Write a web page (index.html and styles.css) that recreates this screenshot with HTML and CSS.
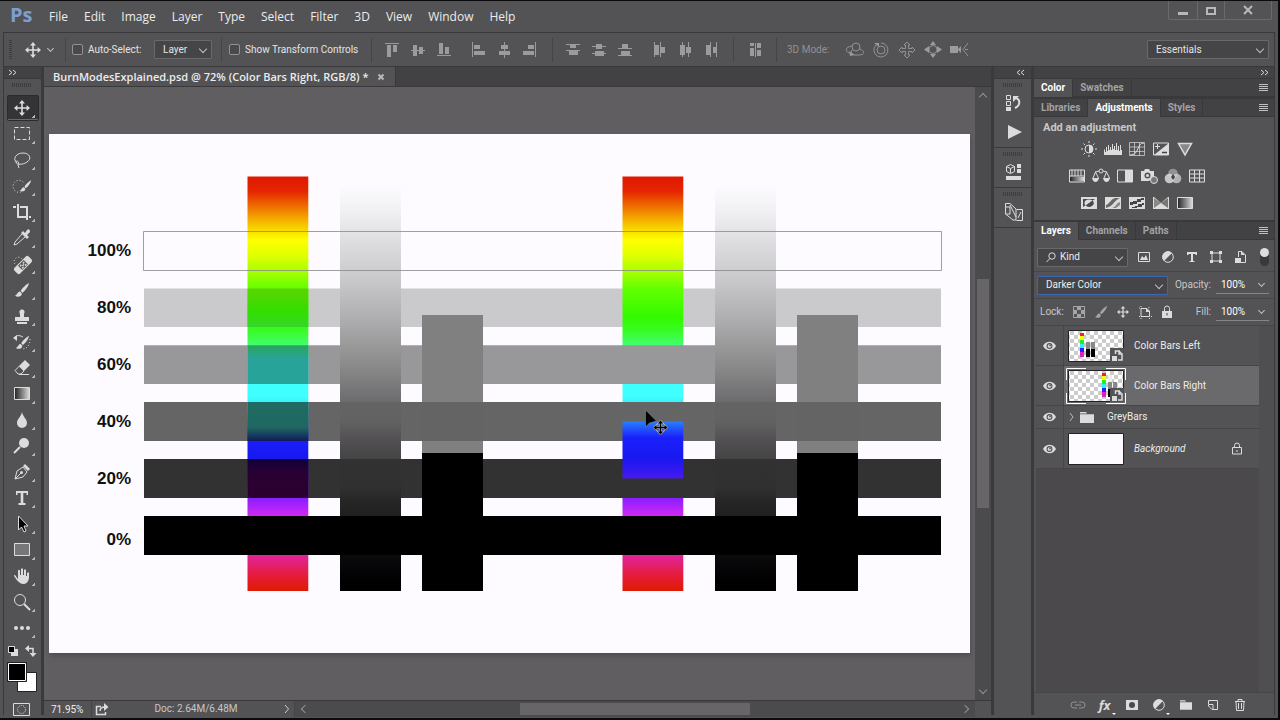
FILE: index.html
```
<!DOCTYPE html>
<html lang="en">
<head>
<meta charset="utf-8">
<title>BurnModesExplained.psd</title>
<link rel="stylesheet" href="styles.css">
</head>
<body>
<svg class="defs" aria-hidden="true">
  <symbol id="eye" viewBox="0 0 14 10"><path d="M0 5C3-1 11-1 14 5C11 11 3 11 0 5Z" fill="#dcdcdc"/><circle cx="7" cy="5" r="3.2" fill="#535254"/><circle cx="7" cy="5" r="2" fill="#dcdcdc"/><circle cx="7.6" cy="4.4" r=".9" fill="#535254"/></symbol>
  <symbol id="move" viewBox="0 0 16 16"><path d="M8 0L11 3.4H8.8V7.2H12.6V5L16 8L12.6 11V8.8H8.8V12.6H11L8 16L5 12.6H7.2V8.8H3.4V11L0 8L3.4 5V7.2H7.2V3.4H5Z"/></symbol>
  <symbol id="brush" viewBox="0 0 18 18"><path d="M17 1C13 3 9 7 7.500 10L9.500 12C12.500 10 16 5 17 1ZM6.800 10.800C4 10.500 4.500 14 1 15.500C4 17.500 9 16.500 8.800 12.800Z"/></symbol>
  <symbol id="folder" viewBox="0 0 14 11"><path d="M0 0H6L7 1.500H0ZM0 2.200H14V11H0Z"/></symbol>
  <symbol id="halfcircle" viewBox="0 0 12 12"><circle cx="6" cy="6" r="5.300" fill="none" stroke="#dcdcdc"/><path d="M10 2A5.600 5.600 0 0 0 2 10Z" fill="#dcdcdc"/></symbol>
  <symbol id="smart" viewBox="0 0 14 14"><path d="M0 0H14V14H0Z" fill="#535254"/><path d="M5.500 6V3H9V6H12V12H8" fill="none" stroke="#dcdcdc" stroke-width="1.500"/><path d="M2 8H7V13H2ZM9 2L12.500 5.500H9Z" fill="#dcdcdc"/></symbol>
  <linearGradient id="rainbow" x1="0" y1="177" x2="0" y2="591" gradientUnits="userSpaceOnUse">
    <stop offset="0" stop-color="#df1800"/><stop offset=".035" stop-color="#e62600"/><stop offset=".07" stop-color="#ee6c00"/><stop offset=".1" stop-color="#f4a800"/><stop offset=".13" stop-color="#f7de00"/><stop offset=".152" stop-color="#ffff00"/><stop offset=".19" stop-color="#e0ff00"/><stop offset=".23" stop-color="#a4ff00"/><stop offset=".27" stop-color="#62ff00"/><stop offset=".34" stop-color="#33fa00"/><stop offset=".37" stop-color="#39fb24"/><stop offset=".405" stop-color="#40ff6c"/><stop offset=".46" stop-color="#40ffff"/><stop offset=".53" stop-color="#40ffff"/><stop offset=".55" stop-color="#39e8fc"/><stop offset=".59" stop-color="#2880fc"/><stop offset=".63" stop-color="#1a20fb"/><stop offset=".68" stop-color="#1818f0"/><stop offset=".727" stop-color="#4619ef"/><stop offset=".78" stop-color="#9020ff"/><stop offset=".815" stop-color="#cd28f2"/><stop offset=".913" stop-color="#e0249c"/><stop offset=".96" stop-color="#e61c40"/><stop offset="1" stop-color="#df1a00"/>
  </linearGradient>
  <linearGradient id="ramp" x1="0" y1="177" x2="0" y2="591" gradientUnits="userSpaceOnUse">
    <stop offset=".02" stop-color="#fdfbff"/><stop offset=".085" stop-color="#f0eff1"/><stop offset=".15" stop-color="#dfdee0"/><stop offset=".25" stop-color="#c8c7c9"/><stop offset=".35" stop-color="#acabad"/><stop offset=".405" stop-color="#9b9a9b"/><stop offset=".48" stop-color="#838283"/><stop offset=".543" stop-color="#6c6b6d"/><stop offset=".544" stop-color="#656465"/><stop offset=".59" stop-color="#636263"/><stop offset=".63" stop-color="#545254"/><stop offset=".68" stop-color="#454445"/><stop offset=".682" stop-color="#333233"/><stop offset=".75" stop-color="#313031"/><stop offset=".775" stop-color="#292829"/><stop offset=".815" stop-color="#212021"/><stop offset=".913" stop-color="#0b0a0d"/><stop offset=".98" stop-color="#000"/>
  </linearGradient>
  <linearGradient id="mix80" x1="0" y1="0" x2="0" y2="1"><stop offset="0" stop-color="#5cd400"/><stop offset=".6" stop-color="#31df00"/><stop offset="1" stop-color="#35d628"/></linearGradient>
  <linearGradient id="mix60" x1="0" y1="0" x2="0" y2="1"><stop offset="0" stop-color="#2ba55c"/><stop offset=".35" stop-color="#28a39a"/><stop offset="1" stop-color="#28a39a"/></linearGradient>
  <linearGradient id="mix40" x1="0" y1="0" x2="0" y2="1"><stop offset="0" stop-color="#1f6b62"/><stop offset=".65" stop-color="#1e6861"/><stop offset="1" stop-color="#101a5c"/></linearGradient>
  <linearGradient id="mix20" x1="0" y1="0" x2="0" y2="1"><stop offset="0" stop-color="#100038"/><stop offset=".35" stop-color="#2a0033"/><stop offset="1" stop-color="#2b0030"/></linearGradient>
  <linearGradient id="fade"><stop stop-color="#222"/><stop offset="1" stop-color="#ddd"/></linearGradient>
  <pattern id="checker" width="8" height="8" patternUnits="userSpaceOnUse"><path d="M0 0H8V8H0Z" fill="#fff"/><path d="M0 0H4V4H0ZM4 4H8V8H4Z" fill="#ccc"/></pattern>
</svg>

<header class="titlebar">
  <span class="logo">Ps</span>
  <nav class="menu" aria-label="Main menu">
    <button>File</button><button>Edit</button><button>Image</button><button>Layer</button><button>Type</button><button>Select</button><button>Filter</button><button>3D</button><button>View</button><button>Window</button><button>Help</button>
  </nav>
  <div class="window-controls">
    <button aria-label="Minimize"><svg width="28" height="18"><path d="M9 11H19V14H9Z" fill="#b8b8b8"/></svg></button>
    <button aria-label="Maximize"><svg width="26" height="18"><path d="M9 7H17V13H9Z" fill="none" stroke="#b8b8b8" stroke-width="2"/></svg></button>
    <button aria-label="Close"><svg width="46" height="18"><path d="M19 5L27 13M27 5L19 13" stroke="#b8b8b8" stroke-width="2"/></svg></button>
  </div>
</header>

<section class="options" aria-label="Tool options">
  <div class="opt opt-tool"><span class="grip-v"></span><svg class="light" width="16" height="16"><use href="#move"/></svg><span class="chev"></span></div>
  <div class="opt opt-auto">
    <label class="check"><input type="checkbox">Auto-Select:</label>
    <span class="select select-layer"><select aria-label="Auto-select target"><option>Layer</option></select></span>
  </div>
  <div class="opt opt-show"><label class="check"><input type="checkbox">Show Transform Controls</label></div>
  <div class="opt opt-align">
    <button aria-label="Align top edges"><svg width="26" height="18"><path d="M6 2.500H20"/><path d="M8 4H12V16H8ZM14 4H18V11H14Z"/></svg></button>
    <button aria-label="Align vertical centers"><svg width="26" height="18"><path d="M6 9.500H20"/><path d="M8 4H12V15H8ZM14 6H18V13H14Z"/></svg></button>
    <button aria-label="Align bottom edges"><svg width="26" height="18"><path d="M6 14.500H20"/><path d="M8 2H12V13H8ZM14 6H18V13H14Z"/></svg></button>
    <i></i>
    <button aria-label="Align left edges"><svg width="26" height="18"><path d="M7.500 1V16"/><path d="M9 4H15V8H9ZM9 10H20V14H9Z"/></svg></button>
    <button aria-label="Align horizontal centers"><svg width="26" height="18"><path d="M13.500 1V17"/><path d="M10 4H17V8H10ZM8 10H19V14H8Z"/></svg></button>
    <button aria-label="Align right edges"><svg width="26" height="18"><path d="M18.500 1V16"/><path d="M11 4H17V8H11ZM6 10H17V14H6Z"/></svg></button>
  </div>
  <div class="opt opt-dist">
    <button aria-label="Distribute top"><svg width="26" height="18"><path d="M6 3.500H20M6 9.500H20"/><path d="M10 3H16V7H10ZM9 10H18V14H9Z"/></svg></button>
    <button aria-label="Distribute middle"><svg width="26" height="18"><path d="M6 5.500H20M6 12.500H20"/><path d="M10 3H16V8H10ZM9 10H18V15H9Z"/></svg></button>
    <button aria-label="Distribute bottom"><svg width="26" height="18"><path d="M6 7.500H20M6 14.500H20"/><path d="M10 3H16V7H10ZM9 10H18V14H9Z"/></svg></button>
    <i></i>
    <button aria-label="Distribute left"><svg width="26" height="18"><path d="M8.500 1V16M14.500 1V16"/><path d="M9 4H13V14H9ZM15 6H19V12H15Z"/></svg></button>
    <button aria-label="Distribute center"><svg width="26" height="18"><path d="M10.500 1V16M16.500 1V16"/><path d="M8 4H13V14H8ZM14 6H19V12H14Z"/></svg></button>
    <button aria-label="Distribute right"><svg width="26" height="18"><path d="M12.500 1V16M18.500 1V16"/><path d="M8 4H12V14H8ZM15 6H18V12H15Z"/></svg></button>
  </div>
  <div class="opt opt-space"><button aria-label="Auto-align layers"><svg width="26" height="18"><path d="M13.500 2V16"/><path d="M8 2H12V5H8ZM8 7H12V15H8ZM15 2H19V7H15ZM15 9H19V15H15Z"/></svg></button></div>
  <div class="opt opt-3d"><span class="mode">3D Mode:</span>
    <button aria-label="Orbit"><svg width="26" height="18"><g class="ln"><circle cx="14" cy="6" r="4"/><path d="M10 5C3 6 3 10 7 12M10 9L9 12M18 8C23 10 23 14 17 14H12"/></g><path d="M7 10L13 14L8 15Z"/></svg></button>
    <button aria-label="Roll"><svg width="26" height="18"><g class="ln"><circle cx="13" cy="9" r="4"/><path d="M8 4A7 7 0 1 0 13 2"/></g><path d="M6 2H11V6Z"/></svg></button>
    <button aria-label="Pan"><svg width="26" height="18"><path class="ln" d="M13 1L16 4H14.500V7.500H18V6L21 9L18 12V10.500H14.500V14H16L13 17L10 14H11.500V10.500H8V12L5 9L8 6V7.500H11.500V4H10Z"/></svg></button>
    <button aria-label="Slide"><svg width="26" height="18"><circle class="ln" cx="13" cy="8.500" r="4"/><path d="M13 0L16 4H10ZM13 17L10 13H16ZM4 8.500L9 5V12ZM22 8.500L17 5V12Z"/></svg></button>
    <button aria-label="Zoom camera"><svg width="26" height="18"><path d="M4 5H12V8L15 5V12L12 9V12H4Z"/><path class="ln" d="M22 2L17 8.500L22 15M19 8.500H22"/></svg></button>
  </div>
  <span class="select select-workspace"><select aria-label="Workspace"><option>Essentials</option></select></span>
</section>

<main class="workspace">
  <aside class="tools" aria-label="Tools">
    <div class="strip strip-left"><svg width="8" height="7"><path d="M0 1L3 3.500L0 6M4 1L7 3.500L4 6"/></svg></div>
    <div class="grip"></div>
    <div class="tool-list">
      <button class="on" aria-label="Move"><svg viewBox="0 0 26 26"><use href="#move" x="5" y="5" width="16" height="16"/></svg></button>
      <button aria-label="Marquee"><svg viewBox="0 0 26 26"><path class="o" stroke-dasharray="4 2" d="M5.500 6.500H20.500V18.500H5.500Z"/></svg></button>
      <button aria-label="Lasso"><svg viewBox="0 0 26 26"><path class="o" d="M8 16C3 12 7 6 14 6C21 6 23 12 18 15C14 18 7 18 7 15C7 13 11 14 9 18L10 21"/></svg></button>
      <button aria-label="Quick selection"><svg viewBox="0 0 26 26"><path class="o" stroke-dasharray="1 2" d="M12 19A6 6 0 1 1 15 10"/><use href="#brush" x="10" y="6" width="13" height="14"/></svg></button>
      <button aria-label="Crop"><svg viewBox="0 0 26 26"><path class="o2" d="M9 5V18H19M4 8H7M11 8H18V21M20 18H22"/></svg></button>
      <button aria-label="Eyedropper"><svg viewBox="0 0 26 26"><path class="o" d="M13 9L6 17L5 20L8 19L16 12"/><path d="M12 8L14 6L16 8L18 5Q21 3 21 7L18 10L20 12L18 14Z"/></svg></button>
      <button aria-label="Healing brush"><svg viewBox="0 0 26 26"><path class="o" stroke-dasharray="1 2" d="M6 13A4 4 0 1 1 13 8"/><g transform="rotate(-45 14 14)"><rect x="4" y="10" width="20" height="8" rx="2"/><path d="M10 11H18V17H10Z" fill="#535254"/><path d="M11 12H13V13.500H11ZM15 12H17V13.500H15ZM13 13.500H15V15H13ZM11 15H13V16.500H11ZM15 15H17V16.500H15Z"/></g></svg></button>
      <button aria-label="Brush"><svg viewBox="0 0 26 26"><use href="#brush" x="5" y="5" width="16" height="16"/></svg></button>
      <button aria-label="Clone stamp"><svg viewBox="0 0 26 26"><path d="M11 11C8 5 18 5 15 11V14H20V18H6V14H11ZM8 19H18V21H8Z"/></svg></button>
      <button aria-label="History brush"><svg viewBox="0 0 26 26"><path class="o" d="M5 9C8 5 12 7 14 8"/><path d="M4 9L8 6V12Z"/><path class="o" stroke-dasharray="1 2" d="M21 10C21 16 18 20 13 20"/><use href="#brush" x="6" y="6" width="15" height="15"/></svg></button>
      <button aria-label="Eraser"><svg viewBox="0 0 26 26"><path d="M12 9L16 5L21 10L15 16L10 11Z"/><path class="o" d="M10.500 11L6 15.500L9 19H12L15 16ZM10 19.500H20"/></svg></button>
      <button aria-label="Gradient"><svg viewBox="0 0 26 26"><path fill="url(#fade)" stroke="#dcdcdc" d="M5.500 6.500H20.500V18.500H5.500Z"/></svg></button>
      <button aria-label="Blur"><svg viewBox="0 0 26 26"><path d="M13 5C14 10 18 12 18 16A5 5 0 0 1 8 16C8 12 12 10 13 5Z"/></svg></button>
      <button aria-label="Dodge"><svg viewBox="0 0 26 26"><circle cx="15" cy="10" r="5"/><path class="o2" d="M11 14L5 20"/></svg></button>
      <button aria-label="Pen"><svg viewBox="0 0 26 26"><path class="o" d="M6 20L8 12L14 8L18 13L14 18L6 20L12 14"/><circle cx="12.500" cy="13.500" r="1.500"/><path d="M14 7L16 5L21 10L19 12Z"/></svg></button>
      <button aria-label="Type"><svg viewBox="0 0 26 26"><path d="M7 6H19V10H17.500V8H14.300V18H16.500V20H9.500V18H11.700V8H8.500V10H7Z"/></svg></button>
      <button aria-label="Path selection"><svg viewBox="0 0 26 26"><path d="M9.500 5V19L12.500 16L15 21L17 20L15 15H19Z" fill="#000" stroke="#dcdcdc"/></svg></button>
      <button aria-label="Rectangle"><svg viewBox="0 0 26 26"><path d="M5.500 6.500H20.500V18.500H5.500Z" fill="#777678" stroke="#dcdcdc"/></svg></button>
      <button aria-label="Hand"><svg viewBox="0 0 26 26"><path d="M6 12L9 16V7.500Q10 6 11 7.500V12H12V6Q13 4.500 14 6V12H15V7Q16 5.500 17 7V13H18V10Q19.500 8.500 20 10V15Q19 21 14 21Q10 21 5 13Q5 11.500 6 12Z"/></svg></button>
      <button aria-label="Zoom"><svg viewBox="0 0 26 26"><circle class="o" cx="11" cy="11" r="5.500"/><path class="o2" d="M15 15L21 21"/></svg></button>
      <button aria-label="More tools"><svg viewBox="0 0 26 26"><circle cx="7" cy="13" r="2"/><circle cx="13" cy="13" r="2"/><circle cx="19" cy="13" r="2"/></svg></button>
    </div>
    <svg class="swatches" width="37" height="76" role="img" aria-label="Foreground and background colors">
      <path d="M8 9H13V14H8Z" fill="#dcdcdc" stroke="#dcdcdc" stroke-width="2"/><path d="M4.500 5.500H10.500V11.500H4.500Z" fill="#000" stroke="#dcdcdc"/>
      <path d="M23 7.500H29V13" fill="none" stroke="#dcdcdc" stroke-width="1.500"/><path d="M21 7.500L25 4V11ZM29 16L25.500 12H32.500Z" fill="#dcdcdc"/>
      <path d="M13.500 31.500H32.500V50.500H13.500Z" fill="#fff" stroke="#222"/><path d="M3.500 21.500H22.500V40.500H3.500Z" fill="#000" stroke="#222"/><path d="M4.500 22.500H21.500V39.500H4.500Z" fill="#000" stroke="#fff"/>
      <path d="M9.500 62.500H25.500V74.500H9.500Z" fill="none" stroke="#dcdcdc"/><circle cx="17.500" cy="68.500" r="4" fill="none" stroke="#dcdcdc" stroke-dasharray="1 1"/>
    </svg>
  </aside>

  <section class="document">
    <div class="doc-tabs"><div class="doc-tab"><span>BurnModesExplained.psd @ 72% (Color Bars Right, RGB/8) *</span><button aria-label="Close document"><svg width="8" height="8"><path d="M1.500 1.500L6.500 6.500M6.500 1.500L1.500 6.500" stroke="#b8b8b8" stroke-width="2"/></svg></button></div></div>
    <div class="canvas">
      <svg class="art" viewBox="49 134 921 519" role="img" aria-label="Color bars over grey bars">
        <path fill="#fdfbff" d="M49 134H970V653H49Z"/>
        <path fill="#cac9cc" d="M144 288.500H941V327H144Z"/>
        <path fill="#989799" d="M144 345.300H941V384H144Z"/>
        <path fill="#666566" d="M144 402H941V441H144Z"/>
        <path fill="#333233" d="M144 459H941V498H144Z"/>
        <g id="bars">
          <path fill="url(#rainbow)" d="M247.500 176.500H308.300V591H247.500Z"/>
          <path fill="url(#ramp)" d="M340 176.500H401V591H340Z"/>
          <path fill="#808080" d="M422 315H483V453H422Z"/><path fill="#656465" d="M422 402H483V441H422Z"/>
          <path d="M422 453H483V591H422Z"/>
        </g>
        <path fill="url(#mix80)" d="M247.500 288.500H308.300V327H247.500Z"/>
        <path fill="url(#mix60)" d="M247.500 345.300H308.300V384H247.500Z"/>
        <path fill="url(#mix40)" d="M247.500 402H308.300V441H247.500Z"/>
        <path fill="url(#mix20)" d="M247.500 459H308.300V498H247.500Z"/>
        <use href="#bars" x="375"/>
        <path fill="#989799" d="M622 345.300H684V384H622Z"/>
        <path fill="#666566" d="M622 402H684V421.500H622Z"/>
        <path fill="#333233" d="M622 478.500H684V498H622Z"/>
        <path d="M144 516H941V555H144Z"/>
        <path fill="none" stroke="#888" stroke-opacity=".8" d="M143.500 231.500H941.500V270.500H143.500Z"/>
        <g class="art-labels"><text x="131" y="256">100%</text><text x="131" y="313">80%</text><text x="131" y="370">60%</text><text x="131" y="427">40%</text><text x="131" y="484">20%</text><text x="131" y="545">0%</text></g>
        <path d="M645.500 410V427L649.500 423L656.500 421Z" stroke="#888" stroke-width=".6"/>
        <use href="#move" x="653.500" y="420.500" width="14" height="14" stroke="#bbb" stroke-width="1.500" paint-order="stroke"/>
      </svg>
    </div>
    <div class="scroll-v"><span class="arr up"></span><div class="track"><div class="thumb"></div></div><span class="arr down"></span></div>
    <footer class="status">
      <input class="zoom" aria-label="Zoom level" value="71.95%">
      <button class="share" aria-label="Share"><svg width="14" height="13"><path d="M6 3.500H1.500V11.500H10.500V9M5 8C5 5 7 4 10 4" fill="none" stroke="#dcdcdc" stroke-width="1.500"/><path d="M9 0L13.500 4L9 8Z" fill="#dcdcdc"/></svg></button>
      <span class="docsize">Doc: 2.64M/6.48M</span>
      <button class="more" aria-label="Status options"><svg width="6" height="10"><path d="M1 1L4.500 5L1 9" fill="none" stroke="#ccc"/></svg></button>
      <div class="scroll-h"><span class="arr left"></span><div class="track"><div class="thumb"></div></div><span class="arr right"></span></div>
    </footer>
  </section>

  <aside class="dock" aria-label="Collapsed panels">
    <div class="strip strip-mid"><svg width="8" height="7"><path d="M4 1L1 3.500L4 6M8 1L5 3.500L8 6"/></svg></div>
    <div class="dock-group"><div class="grip"></div>
      <button aria-label="History"><svg width="18" height="18"><path d="M1.500 1.500H5.500V5.500H1.500ZM1.500 7.500H5.500V11.500H1.500Z" fill="none" stroke="#dcdcdc"/><path d="M1 13H6V17H1ZM8 2H14L8 8Z" fill="#dcdcdc"/><path d="M11 4C16 6 15 12 10 14" fill="none" stroke="#dcdcdc" stroke-width="2"/></svg></button>
      <button aria-label="Actions"><svg width="18" height="18"><path d="M3 2L17 9L3 16Z" fill="#dcdcdc"/></svg></button>
    </div>
    <div class="dock-group"><div class="grip"></div>
      <button aria-label="Properties"><svg width="18" height="18"><path d="M5.500 1.500L9.500 3.500V8.500L5.500 10.500L1.500 8.500V3.500L5.500 5.500L9.500 3.500M1.500 3.500L5.500 1.500M5.500 5.500V10" fill="none" stroke="#dcdcdc"/><path d="M12 1H16V5H12ZM12 6H16V10H12ZM1 13H16V17H1Z" fill="#dcdcdc"/></svg></button>
    </div>
    <div class="dock-group"><div class="grip"></div>
      <button aria-label="Timeline"><svg width="20" height="20"><path d="M1.500 1.500H6L12 7V18H9L1.500 12ZM1.500 5H6V12H1.500M12.500 7.500H18.500V18.500H12.500M6 3L12 15M14 16L17 10" fill="none" stroke="#dcdcdc"/></svg></button>
    </div>
  </aside>

  <aside class="panels" aria-label="Panels">
    <div class="strip strip-right"><svg width="8" height="7"><path d="M0 1L3 3.500L0 6M4 1L7 3.500L4 6"/></svg></div>
    <div class="tabs" role="tablist"><button class="on" role="tab">Color</button><button role="tab">Swatches</button><button class="burger" aria-label="Color panel menu"></button></div>
    <section class="panel adjustments">
      <div class="tabs" role="tablist"><button role="tab">Libraries</button><button class="on" role="tab">Adjustments</button><button role="tab">Styles</button><button class="burger" aria-label="Adjustments panel menu"></button></div>
      <h2>Add an adjustment</h2>
      <div class="adj-row">
        <button aria-label="Brightness"><svg viewBox="0 0 18 16"><circle cx="9" cy="8" r="4" class="o"/><path d="M9 4A4 4 0 0 1 9 12Z"/><path class="o" d="M9 0V2M9 14V16M1 8H3M15 8H17M3.500 2.500L5 4M13 12L14.500 13.500M3.500 13.500L5 12M13 4L14.500 2.500"/></svg></button>
        <button aria-label="Levels"><svg viewBox="0 0 18 16"><path d="M0 14V9L1 8V11H2V6H3V10H4V4H5V9H6V6H7V9H8V3H9V8H10V5H11V9H12V2H13V9H14V5H15V10H16V4H17V9H18V14Z"/></svg></button>
        <button aria-label="Curves"><svg viewBox="0 0 18 16"><path class="o" opacity=".7" d="M1.500 1.500H16.500V14.500H1.500ZM6.500 1.500V14.500M11.500 1.500V14.500M1.500 6H16.500M1.500 10.500H16.500"/><path class="o" d="M2 14C12 14 8 2 16 2"/></svg></button>
        <button aria-label="Exposure"><svg viewBox="0 0 18 16"><path class="o" d="M1.500 2H16.500V14H1.500Z"/><path d="M17 2V14H2Z"/><path class="o" d="M3 5.500H8M5.500 3V8"/><path d="M10 11.500H15" stroke="#444" stroke-width="1.500"/></svg></button>
        <button aria-label="Vibrance"><svg viewBox="0 0 18 16"><path d="M2.500 2.500H15.500L9 14Z" fill="#888" stroke="#dcdcdc" stroke-width="1.500"/></svg></button>
      </div>
      <div class="adj-row">
        <button aria-label="Hue/Saturation"><svg viewBox="0 0 18 16"><path class="o" d="M1.500 2H16.500V14H1.500ZM4 2V8M7 2V8M10 2V8M13 2V8M1.500 8H16.500"/><path fill="url(#fade)" d="M2 9H16V13H2Z"/></svg></button>
        <button aria-label="Color balance"><svg viewBox="0 0 18 16"><path class="o" d="M3 4L7 3M11 3L15 4M3.500 4L1 10M3.500 4L6.500 10M14.500 4L12 10M14.500 4L17.500 10"/><circle class="o" cx="9" cy="3" r="2"/><path d="M0 10H7Q6 14 3.500 14Q1 14 0 10ZM11 10H18Q17 14 14.500 14Q12 14 11 10Z"/></svg></button>
        <button aria-label="Black and white"><svg viewBox="0 0 18 16"><path class="o" d="M1.500 2H16.500V14H1.500Z"/><path d="M9 2H16V14H9Z"/></svg></button>
        <button aria-label="Photo filter"><svg viewBox="0 0 18 16"><path d="M1 3H4L5 1H9L10 3H14V8L9 13H1Z"/><circle cx="7.500" cy="7.500" r="3" fill="#535254"/><circle cx="7.500" cy="7.500" r="1.500"/><circle cx="14" cy="12" r="3.500" fill="#777" stroke="#dcdcdc"/></svg></button>
        <button aria-label="Channel mixer"><svg viewBox="0 0 18 16"><circle cx="9" cy="5.500" r="4.800" fill="#929193"/><circle cx="5.500" cy="10.500" r="4.800" opacity=".85"/><circle cx="12.500" cy="10.500" r="4.800" opacity=".7"/><path d="M9 6L11 9L9 12L7 9Z" fill="#444"/></svg></button>
        <button aria-label="Color lookup"><svg viewBox="0 0 18 16"><path class="o" d="M1.500 2H16.500V14H1.500ZM6.500 2V14M11.500 2V14M1.500 6H16.500M1.500 10H16.500"/></svg></button>
      </div>
      <div class="adj-row">
        <button aria-label="Invert"><svg viewBox="0 0 18 16"><path d="M1 2H17V14H1Z"/><path d="M3 4H15L3 12Z" fill="#4a494b"/><ellipse cx="9" cy="8" rx="4.500" ry="3.500"/><path d="M12.500 5.500A4.500 3.500 0 0 1 5.500 10.500Z" fill="#4a494b"/></svg></button>
        <button aria-label="Posterize"><svg viewBox="0 0 18 16"><path d="M1 2H17V14H1Z"/><path d="M2 10C6 9 7 3 12 3H16C10 5 10 11 2 13Z" fill="#666"/><path d="M8 13C12 12 12 8 16 7V10L12 13Z" fill="#888"/></svg></button>
        <button aria-label="Threshold"><svg viewBox="0 0 18 16"><path d="M1 2H17V14H1Z"/><path d="M2 7H5V6H9V4H13V3H16V5H13V7H9V9H5V10H2ZM4 12H7V11H10V9H14V8H16V10H14V12H9V13H4Z" fill="#444"/></svg></button>
        <button aria-label="Selective color"><svg viewBox="0 0 18 16"><path d="M1 2H17V14H1Z"/><path d="M2 3L9 8L2 13Z" fill="#888"/><path d="M16 3L9 8L16 13Z" fill="#777"/><path d="M2 2H16L9 8Z" fill="#555"/></svg></button>
        <button aria-label="Gradient map"><svg viewBox="0 0 18 16"><path fill="url(#fade)" stroke="#dcdcdc" d="M1.500 2.500H16.500V13.500H1.500Z"/></svg></button>
      </div>
    </section>
    <section class="panel layers">
      <div class="tabs" role="tablist"><button class="on" role="tab">Layers</button><button role="tab">Channels</button><button role="tab">Paths</button><button class="burger" aria-label="Layers panel menu"></button></div>
      <div class="ctl filter">
        <span class="select select-kind"><svg class="mag" width="10" height="10"><circle cx="6" cy="4" r="3.200"/><path d="M4 6.500L.5 10"/></svg><select aria-label="Filter kind"><option>Kind</option></select></span>
        <div class="filter-icons">
          <button aria-label="Pixel layers"><svg viewBox="0 0 14 14"><path class="o" d="M1.500 2.500H12.500V11.500H1.500Z"/><path d="M3 10L5 6L7 8L9 5L11 10Z"/></svg></button>
          <button aria-label="Adjustment layers"><svg viewBox="0 0 14 14"><use href="#halfcircle" x="1" y="1" width="12" height="12"/></svg></button>
          <button aria-label="Type layers"><svg viewBox="0 0 14 14"><path d="M2 2H12V5H10.500V4H8V11H9.500V12H4.500V11H6V4H3.500V5H2Z"/></svg></button>
          <button aria-label="Shape layers"><svg viewBox="0 0 14 14"><path class="o" d="M3 3H11V11H3Z"/><path d="M1 1H4V4H1ZM10 1H13V4H10ZM1 10H4V13H1ZM10 10H13V13H10Z"/></svg></button>
          <button aria-label="Smart objects"><svg viewBox="0 0 14 14"><path class="o" d="M5.500 7V1.500H9L12.500 5V12.500H8"/><path d="M2 8H8V13H2ZM8 1L12 5H8Z"/></svg></button>
        </div>
        <button class="toggle" aria-label="Toggle filtering"></button>
      </div>
      <div class="ctl blend">
        <span class="select select-blend"><select aria-label="Blend mode"><option>Darker Color</option></select></span>
        <label class="num">Opacity:<span class="numbox"><input value="100%"><span class="chev"></span></span></label>
      </div>
      <div class="ctl lock"><span class="lock-label">Lock:</span>
        <div class="lock-icons">
          <button aria-label="Lock transparent pixels"><svg viewBox="0 0 14 14" opacity=".6"><path class="o" d="M1.500 1.500H12.500V12.500H1.500Z"/><path d="M5 2H9V5H5ZM2 5H5V9H2ZM9 5H12V9H9ZM5 9H9V12H5Z"/></svg></button>
          <button aria-label="Lock image pixels"><svg viewBox="0 0 14 14" opacity=".6"><use href="#brush" width="14" height="14"/></svg></button>
          <button aria-label="Lock position"><svg viewBox="0 0 14 14"><use href="#move" x="1" y="1" width="12" height="12"/></svg></button>
          <button aria-label="Lock artboard"><svg viewBox="0 0 14 14"><path class="o" d="M3 3.500H9L11.500 6V11.500H3ZM3 1V2M1 3H2M11 2V3M1 11.500H2M13 11.500H14M3 13V14M11.500 13V14"/><path d="M8 3L12 7H8Z"/></svg></button>
          <button aria-label="Lock all"><svg viewBox="0 0 14 14"><path class="o" d="M4.500 6V3.500A2.500 2.500 0 0 1 9.500 3.500V6"/><path d="M2 6H12V13H2Z"/><path d="M6.500 8H7.500V10.500H6.500Z" fill="#444"/></svg></button>
        </div>
        <label class="num">Fill:<span class="numbox"><input value="100%"><span class="chev"></span></span></label>
      </div>
      <div class="list-wrap">
        <ul class="list">
          <li class="tall"><button class="vis" aria-label="Hide Color Bars Left"><svg width="13" height="10"><use href="#eye"/></svg></button>
            <svg class="thumbnail" width="60" height="38"><path d="M2.500 3.500H57.500V34.500H2.500Z" fill="url(#checker)" stroke="#222"/><g id="mini"><path fill="#e22" d="M14 6H18V10H14Z"/><path fill="#ef0" d="M14 9H18V13H14Z"/><path fill="#2e2" d="M14 13H18V17H14Z"/><path fill="#3ee" d="M14 17H18V21H14Z"/><path fill="#22f" d="M14 21H18V25H14Z"/><path fill="#d2b" d="M14 25H18V30H14Z"/><path fill="#eee" d="M20 8H24V15H20Z"/><path fill="#888" d="M20 15H24V22H20ZM25 15H29V22H25Z"/><path d="M20 22H24V30H20ZM25 22H29V30H25Z"/></g><use href="#smart" x="44" y="21" width="14" height="14"/></svg>
            <span class="name">Color Bars Left</span></li>
          <li class="tall selected"><button class="vis" aria-label="Hide Color Bars Right"><svg width="13" height="10"><use href="#eye"/></svg></button>
            <svg class="thumbnail" width="60" height="38"><path d="M2.500 3.500H57.500V34.500H2.500Z" fill="url(#checker)" stroke="#222"/><use href="#mini" x="22"/><use href="#smart" x="44" y="21" width="14" height="14"/><path d="M.5 13V1.500H20M40 1.500H59.500V13M.5 26V36.500H20M40 36.500H59.500V26" fill="none" stroke="#fff"/></svg>
            <span class="name">Color Bars Right</span></li>
          <li class="short"><button class="vis" aria-label="Hide GreyBars"><svg width="13" height="10"><use href="#eye"/></svg></button>
            <button class="expand" aria-label="Expand GreyBars"><svg width="6" height="10"><path d="M1 1L4 5L1 9" fill="none" stroke="#bbb"/></svg></button><svg class="light" width="14" height="11"><use href="#folder"/></svg>
            <span class="name group-name">GreyBars</span></li>
          <li class="tall"><button class="vis" aria-label="Hide Background"><svg width="13" height="10"><use href="#eye"/></svg></button>
            <svg class="thumbnail" width="60" height="38"><path d="M2.500 3.500H57.500V34.500H2.500Z" fill="#fdfbff" stroke="#222"/></svg>
            <em class="name">Background</em><svg class="padlock" width="12" height="13"><path d="M1.500 5.500H10.500V12H1.500ZM3.500 5V3.500A2.500 2.500 0 0 1 8.500 3.500V5M6 8V10" fill="none" stroke="#dcdcdc"/></svg></li>
        </ul>
      </div>
      <footer class="layer-actions">
        <button aria-label="Link layers"><svg viewBox="0 0 18 16"><path d="M8 5H5A3 3 0 0 0 5 11H8M10 5H13A3 3 0 0 1 13 11H10M6 8H12" fill="none" stroke="#929193"/></svg></button>
        <button class="fx" aria-label="Layer style">fx<span class="caret"></span></button>
        <button aria-label="Add mask"><svg viewBox="0 0 18 16"><path d="M3 3H15V13H3Z"/><circle cx="9" cy="8" r="3" fill="#4a494b"/></svg></button>
        <button aria-label="New adjustment layer"><svg viewBox="0 0 18 16"><use href="#halfcircle" x="3" y="2" width="12" height="12"/></svg><span class="caret"></span></button>
        <button aria-label="New group"><svg viewBox="0 0 18 16"><use href="#folder" x="3" y="3" width="12" height="10"/></svg></button>
        <button aria-label="New layer"><svg viewBox="0 0 18 16"><path class="o" d="M4.500 7V3.500H13.500V12.500H8L4.500 9V7.500H9V12"/></svg></button>
        <button aria-label="Delete layer"><svg viewBox="0 0 18 16"><path class="o" d="M4 4.500H14M7 4V2.500H11V4M5 5L5.500 13.500H12.500L13 5M7.500 6V12M10.500 6V12"/></svg></button>
      </footer>
    </section>
  </aside>
</main>
</body>
</html>
```
FILE: styles.css
```
* { box-sizing: border-box; }
body {
  margin: 0;
  height: 100vh;
  display: flex;
  flex-direction: column;
  background: #535254;
  border: solid #0b0a0c;
  border-width: 1px 2px 2px 0;
  color: #dcdcdc;
  font: 10px/14px Roboto, "Liberation Sans", sans-serif;
  overflow: hidden;
}
.defs { position: absolute; width: 0; height: 0; }
svg { display: block; flex: none; }
button, input, select { font: inherit; color: inherit; margin: 0; padding: 0; border: 0; background: none; }
button { display: flex; align-items: center; justify-content: center; }
.light { fill: #dcdcdc; }

.titlebar { display: flex; height: 31px; padding: 0 6px 0 10px; flex: none; }
.logo { font: bold 20px/28px "Open Sans", sans-serif; color: #7d9fd0; width: 31px; }
.menu { display: flex; flex: 1; font: 12px/30px "Open Sans", sans-serif; color: #ececec; }
.menu button { padding: 0 8px; height: 31px; }
.window-controls { display: flex; height: 19px; border: 1px solid #6a696b; border-top: 0; border-radius: 0 0 2px 2px; }
.window-controls button + button { border-left: 1px solid #6a696b; }

.options {
  display: flex; align-items: center; flex: none;
  height: 35px; margin: 0 3px; padding-right: 5px;
  border: 1px solid #39383a;
  color: #e4e4e4;
}
.opt { display: flex; align-items: center; height: 24px; border-right: 1px solid #454446; flex: none; }
.opt-tool { width: 62px; padding-left: 5px; gap: 7px; }
.opt-tool .light { margin-left: 6px; }
.grip-v { width: 3px; height: 20px; background: repeating-linear-gradient(#3e3d3f 0 1px, transparent 1px 2px); }
.opt-auto { width: 156px; padding-left: 6px; justify-content: space-between; padding-right: 9px; }
.opt-show { width: 150px; padding-left: 7px; }
.opt-align, .opt-dist { width: 181px; padding-left: 7px; }
.opt i { width: 8px; }
.opt-space { width: 43px; padding-left: 8px; }
.opt-3d { border: 0; padding-left: 10px; color: #929193; }
.mode { width: 55px; }
.opt button svg { fill: #9b9a9c; stroke: none; }
.opt-align path:first-child, .opt-dist path:first-child, .opt-space path:first-child { stroke: #9b9a9c; fill: none; }
.opt .ln { fill: none; stroke: #929193; }
.check { display: flex; align-items: center; gap: 5px; }
.check input { appearance: none; width: 11px; height: 11px; border: 1px solid #929193; border-radius: 2px; background: #49484a; }
.chev { width: 5px; height: 5px; flex: none; border: solid #c0bfc1; border-width: 0 1px 1px 0; transform: rotate(45deg); margin-bottom: 2px; }

.select { position: relative; display: flex; align-items: center; height: 19px; border: 1px solid #69686a; background: #454446; border-radius: 1px; flex: none; }
.select::after { content: ""; position: absolute; right: 5px; top: 5px; width: 5px; height: 5px; border: solid #c0bfc1; border-width: 0 1px 1px 0; transform: rotate(45deg); pointer-events: none; }
.select select { appearance: none; width: 100%; height: 100%; padding-left: 8px; outline: 0; }
.select-layer { width: 58px; }
.select-workspace { width: 122px; margin-left: auto; }

.workspace { flex: 1; min-height: 0; display: grid; grid-template-columns: 37px minmax(0, 1fr) 37px 240px; column-gap: 3px; margin: 0 3px 3px; border: solid #39383a; border-width: 0 1px 1px; background: #3a393b; }
.strip { height: 12px; background: #424143; display: flex; align-items: center; padding: 0 5px; border-bottom: 1px solid #39383a; flex: none; }
.strip svg { fill: none; stroke: #dcdcdc; }
.strip-mid { justify-content: center; padding-left: 20px; }
.strip-right { justify-content: flex-end; }
.grip { width: 20px; height: 4px; background: repeating-linear-gradient(90deg, #3c3b3d 0 1px, transparent 1px 2px); }

.tools { background: #535254; display: flex; flex-direction: column; }
.tools .grip { margin: 4px 8px 8px; }
.tool-list { display: flex; flex-direction: column; align-items: center; }
.tool-list button { width: 32px; height: 26px; border-radius: 2px; position: relative; }
.tool-list button::after { content: ""; position: absolute; right: 4px; bottom: 3px; width: 3px; height: 3px; background: linear-gradient(135deg, transparent 40%, #b4b3b5 40%); }
.tool-list button.on { background: #343335; box-shadow: inset 0 0 0 1px #2b2a2c, inset 0 -1px 0 1px #69686a; }
.tool-list svg { width: 26px; height: 26px; fill: #dcdcdc; margin-right: 2px; }
.o { fill: none; stroke: #dcdcdc; }
.o2 { fill: none; stroke: #dcdcdc; stroke-width: 2; }

.document { display: grid; grid-template: 20px minmax(0, 1fr) 17px / minmax(0, 1fr) 16px; background: #424143; min-width: 0; }
.doc-tabs { grid-column: 1 / 3; border-bottom: 1px solid #39383a; display: flex; }
.doc-tab { display: flex; align-items: center; gap: 9px; padding: 0 10px 0 9px; background: #535254; font: 600 11px/18px "Open Sans", sans-serif; color: #ececec; border-right: 1px solid #39383a; }
.canvas { background: #605e61; padding: 47px 5px; }
.art { width: 100%; height: auto; box-shadow: 1px 3px 4px #504f51; }
.art-labels { font: bold 17px "Liberation Sans", sans-serif; text-anchor: end; fill: #111; }
.scroll-v { background: #4b4a4c; display: flex; flex-direction: column; align-items: center; }
.track { flex: 1; }
.scroll-v .track { width: 12px; }
.scroll-v .thumb { position: relative; top: 30%; height: 40%; background: #676567; }
.arr { width: 20px; height: 20px; display: flex; align-items: center; justify-content: center; }
.arr::before { content: ""; width: 5px; height: 5px; border: solid #929193; border-width: 1px 0 0 1px; }
.arr.up::before { transform: rotate(45deg); }
.arr.down::before { transform: rotate(225deg); }
.arr.left::before { transform: rotate(-45deg); }
.arr.right::before { transform: rotate(135deg); }
.status { grid-column: 1 / 3; display: flex; align-items: center; background: #535254; border-top: 1px solid #39383a; padding-right: 16px; }
.zoom { width: 48px; padding-left: 7px; height: 16px; border-right: 1px solid #444345; outline: 0; color: #ececec; }
.share { width: 20px; }
.docsize { width: 168px; text-align: center; color: #c8c7c9; }
.more { width: 15px; height: 16px; border-right: 1px solid #444345; }
.scroll-h { flex: 1; display: flex; align-items: center; height: 16px; background: #4b4a4c; }
.scroll-h .thumb { margin-left: 32%; width: 36%; height: 12px; background: #676567; }

.dock { background: #535254; }
.dock-group { display: flex; flex-direction: column; align-items: center; border-bottom: 1px solid #39383a; padding: 4px 0 1px; }
.dock-group button { height: 29px; width: 37px; padding-left: 3px; }
.dock-group .grip { margin-bottom: 1px; }

.panels { background: #535254; display: flex; flex-direction: column; min-height: 0; }
.tabs { display: flex; height: 18px; background: #424143; border-bottom: 1px solid #39383a; font-weight: bold; color: #a3a2a4; flex: none; }
.tabs button { padding: 0 7px; border-right: 1px solid #39383a; }
.tabs .on { background: #535254; color: #fff; margin-bottom: -1px; }
.tabs .burger { margin-left: auto; padding: 0; border: 0; width: 9px; height: 7px; margin-right: 6px; align-self: center; background: repeating-linear-gradient(#c0bfc1 0 1px, transparent 1px 2px); }
.panel { border-top: 2px solid #39383a; }
.adjustments { flex: none; padding-bottom: 4px; }
.adjustments h2 { font: bold 11px/14px Roboto, sans-serif; color: #c8c7c9; margin: 4px 9px 0; }
.adj-row { display: flex; justify-content: center; height: 27px; padding-right: 34px; }
.adj-row button { width: 24px; }
.adj-row svg, .layer-actions svg { width: 18px; height: 16px; fill: #dcdcdc; }
.layers { flex: 1; min-height: 0; display: flex; flex-direction: column; }
.ctl { display: flex; align-items: center; justify-content: space-between; height: 27px; padding: 0 5px 0 3px; border-bottom: 1px solid #464547; flex: none; color: #c8c7c9; }
.filter { height: 32px; padding-top: 3px; justify-content: flex-start; }
.filter .select { color: #ececec; }
.select-kind { width: 91px; }
.mag { fill: none; stroke: #dcdcdc; margin-left: 8px; }
.select-kind select { padding-left: 4px; }
.filter-icons { display: flex; padding-left: 4px; flex: 1; }
.filter-icons button { width: 24px; }
.filter-icons svg { width: 14px; height: 14px; fill: #dcdcdc; }
.toggle { width: 9px; height: 18px; border-radius: 5px; background: #39383a; align-items: flex-start; }
.toggle::before { content: ""; width: 9px; height: 9px; border-radius: 5px; background: #dcdcdc; }
.select-blend { width: 131px; border: 1px solid #3a66b4; color: #ececec; }
.num { display: flex; align-items: center; gap: 5px; }
.numbox { display: flex; align-items: center; width: 53px; height: 18px; border-bottom: 1px solid #858486; padding: 0 5px; justify-content: space-between; }
.numbox input { width: 30px; outline: 0; color: #fff; }
.lock-icons { display: flex; flex: 1; padding-left: 4px; }
.lock-label { padding-left: 3px; }
.lock-icons button { width: 22px; }
.lock-icons svg { width: 14px; height: 14px; fill: #dcdcdc; }
.list-wrap { flex: 1; min-height: 0; padding-right: 15px; margin-left: 2px; background: linear-gradient(270deg, #4f4e50 15px, #4b494b 15px); }
.list { margin: 0; padding: 0; list-style: none; background: #535254; }
.list li { display: flex; align-items: center; border-bottom: 1px solid #464547; }
.list .tall { height: 40px; }
.list .short { height: 23px; }
.list .selected { background: linear-gradient(90deg, #535254 28px, #6a696b 28px); }
.vis { width: 28px; align-self: stretch; border-right: 1px solid #464547; }
.thumbnail { margin-left: 2px; }
.name { padding-left: 8px; flex: 1; color: #ececec; }
.group-name { padding-left: 13px; }
.expand { width: 16px; }
.padlock { margin-right: 16px; }
.layer-actions { display: flex; justify-content: flex-end; height: 25px; padding-right: 21px; border-top: 1px solid #464547; flex: none; }
.layer-actions button { width: 27px; position: relative; }
.fx { font: italic bold 13px/18px "Open Sans", sans-serif; }
.caret { position: absolute; right: 2px; bottom: 2px; border: 2px solid transparent; border-top-color: #fff; border-bottom: 0; }
```
